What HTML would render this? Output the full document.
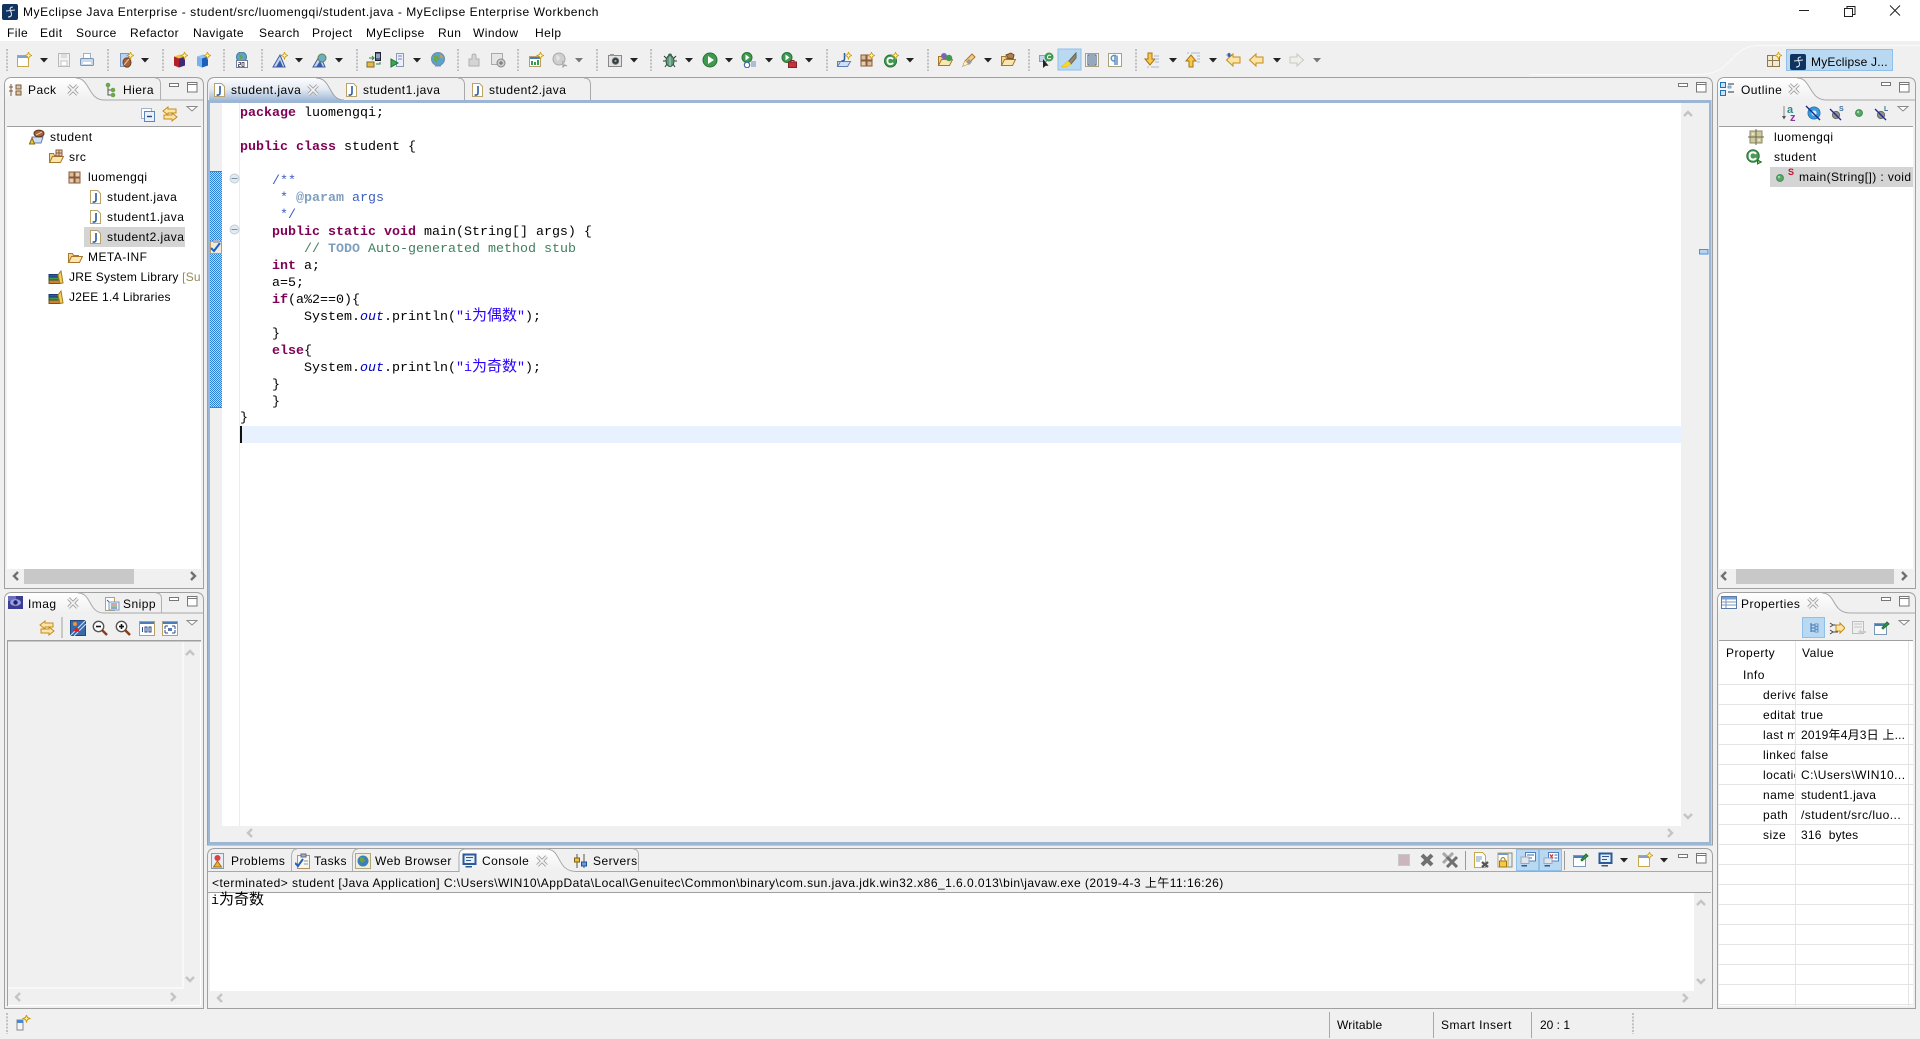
<!DOCTYPE html>
<html><head><meta charset="utf-8"><title>MyEclipse</title>
<style>
html,body{margin:0;padding:0;background:#f0f0f0}
#r{position:relative;width:1920px;height:1039px;overflow:hidden;font:12px/16px "Liberation Sans","WenQuanYi Zen Hei",sans-serif;color:#000;letter-spacing:.46px}
#r>span,.t{position:absolute;white-space:nowrap;height:16px;line-height:16px}
.i{position:absolute;width:16px;height:16px;overflow:visible}
.l{position:absolute;left:240px;height:17px;line-height:17px;white-space:pre;font:13.33px/17px "Liberation Mono",monospace;letter-spacing:0;color:#000}
.k{color:#7f0055;font-weight:bold}.g{color:#3f7f5f}.d{color:#3f5fbf}.m{color:#7f9fbf;font-weight:bold}.s{color:#2a00ff}.f{color:#0000c0;font-style:italic}
.z{font:15px/0 "WenQuanYi Zen Hei","Noto Sans CJK SC",sans-serif}
.clip{overflow:hidden}
</style></head><body><div id="r">
<svg width="1920" height="1039" style="position:absolute;left:0;top:0">
<defs>
<linearGradient id="gv" x1="0" y1="0" x2="0" y2="1"><stop offset="0" stop-color="#fff"/><stop offset="1" stop-color="#f0f0f0"/></linearGradient>
<linearGradient id="ge" x1="0" y1="0" x2="0" y2="1"><stop offset="0" stop-color="#fbfcfe"/><stop offset=".5" stop-color="#e4ebf3"/><stop offset="1" stop-color="#a3bcd9"/></linearGradient>
<pattern id="dt" width="2" height="2" patternUnits="userSpaceOnUse"><rect width="2" height="2" fill="#bcdaf8"/><rect width="1" height="1" fill="#2a7fd8"/><rect x="1" y="1" width="1" height="1" fill="#2a7fd8"/></pattern>
<path id="st" d="M12.5 0l1 2.5 2.5 1-2.5 1-1 2.5-1-2.5-2.5-1 2.5-1z" fill="#fff2a8" stroke="#c99a10" stroke-width=".8"/>
<symbol id="dd" viewBox="0 0 16 16"><path d="M4 6h8l-4 4.5z" fill="#222"/></symbol>
<symbol id="ddg" viewBox="0 0 16 16"><path d="M4 6h8l-4 4.5z" fill="#777"/></symbol>
<symbol id="cl" viewBox="0 0 16 16"><path d="M3.500 3.500l9 9M12.500 3.500l-9 9" stroke="#a0a0a0" stroke-width="3.4" fill="none"/><path d="M3.500 3.500l9 9M12.500 3.500l-9 9" stroke="#f4f4f4" stroke-width="1.6" fill="none"/></symbol>
<symbol id="mn" viewBox="0 0 16 16"><rect x="3.5" y="6.5" width="9" height="3" fill="#fff" stroke="#777"/></symbol>
<symbol id="mx" viewBox="0 0 16 16"><rect x="3.5" y="3.5" width="9.5" height="9.5" fill="#fff" stroke="#777"/><path d="M4 5.5h9" stroke="#777"/></symbol>
<symbol id="vm" viewBox="0 0 16 16"><path d="M3 5.5h10l-5 4.5z" fill="#fff" stroke="#8a8a8a"/></symbol>
<symbol id="jf" viewBox="0 0 16 16"><path d="M3.5 1.5h7l3 3v10h-10z" fill="#fff" stroke="#b9a36b"/><path d="M9 4v7q0 2.3-3.4 2" stroke="#2a5aa0" stroke-width="1.6" fill="none"/></symbol>
<symbol id="new" viewBox="0 0 16 16"><rect x="1.5" y="3.5" width="11" height="11" fill="#fff" stroke="#c5a84e"/><rect x="2" y="4" width="10" height="2" fill="#7ba3d4"/><use href="#st"/></symbol>
<symbol id="save" viewBox="0 0 16 16"><rect x="2.5" y="1.5" width="11" height="13" fill="#f2f2f2" stroke="#b8b8b8"/><rect x="5" y="2" width="6" height="4" fill="#ddd"/><rect x="5" y="9" width="6" height="5" fill="#fff" stroke="#c4c4c4"/></symbol>
<symbol id="print" viewBox="0 0 16 16"><rect x="4.5" y="1.5" width="7" height="5" fill="#fff" stroke="#9db0c8"/><rect x="1.5" y="6.5" width="13" height="7" rx="1" fill="#c9d8ea" stroke="#7c96b8"/><rect x="4" y="10" width="8" height="2" fill="#fff"/></symbol>
<symbol id="bean" viewBox="0 0 16 16"><path d="M2.5 1.5h8v13h-8z" fill="#bcd3ee" stroke="#7598c4"/><ellipse cx="9" cy="10.5" rx="4" ry="4.6" fill="#a5643c" stroke="#6e3d20"/><path d="M6 13l5-6" stroke="#e8c8a8"/><use href="#st"/></symbol>
<symbol id="box" viewBox="0 0 16 16"><path d="M2 4.5l6-2 5 2v9l-6 2-5-2z" fill="#e9c63a"/><path d="M2 4.5l5 2v9l-5-2z" fill="#b3202a"/><path d="M7 6.5l6-2v9l-6 2z" fill="#3f2a78"/><use href="#st"/></symbol>
<symbol id="cube" viewBox="0 0 16 16"><path d="M2 4.5l6-2 5 2v9l-6 2-5-2z" fill="#8fc4f2"/><path d="M2 4.5l5 2v9l-5-2z" fill="#79b2ea"/><path d="M7 6.5l6-2v9l-6 2z" fill="#1a5fc0"/><use href="#st"/></symbol>
<symbol id="g20" viewBox="0 0 16 16"><circle cx="7.5" cy="5" r="5" fill="#5aa7c7" stroke="#4a7a98"/><path d="M5 2l3 1 1 3-3 1z" fill="#6da34d"/><rect x="2.5" y="8.5" width="11" height="7" fill="#fff" stroke="#6d7ea5"/><path d="M4.5 10.5h2v2h-2v2h2M8 10.5h2v4h-2z" stroke="#334" fill="none" stroke-width=".8"/></symbol>
<symbol id="dep" viewBox="0 0 16 16"><path d="M1 15L8 3l5 12z" fill="#c5d6ef" stroke="#3a5ca8"/><path d="M4 15l4-7 3 7z" fill="#3a5ca8"/><use href="#st"/></symbol>
<symbol id="dep2" viewBox="0 0 16 16"><path d="M1 15L8 3l5 12z" fill="#c5d6ef" stroke="#3a5ca8"/><circle cx="10" cy="6" r="4" fill="#6bb0c0" stroke="#637f52"/><path d="M4 15l4-6 3 6z" fill="#3a5ca8"/></symbol>
<symbol id="db" viewBox="0 0 16 16"><rect x="9.5" y="0.5" width="5" height="8" fill="#4a6a8a" stroke="#223"/><path d="M10 3h4M10 5h4" stroke="#dde"/><path d="M1 10h7v5H1z" fill="#e8b84a" stroke="#7a6a2a"/><path d="M3 6h4M6 4l2 2-2 2M10 12h4v-2" stroke="#30803a" fill="none"/></symbol>
<symbol id="srv" viewBox="0 0 16 16"><rect x="6.5" y="1.5" width="7" height="13" fill="#eef" stroke="#8a9ab0"/><path d="M8 4h4M8 7h4" stroke="#6a8ab0"/><path d="M1 7l7 4-7 4z" fill="#3aa850" stroke="#1a7030"/></symbol>
<symbol id="globe" viewBox="0 0 16 16"><circle cx="8" cy="7" r="6.5" fill="#5aa2d6" stroke="#6a90a8"/><path d="M4 3l4 1 2 3-3 2-1 3-2-4z" fill="#6fa84a"/><path d="M10 2l3 3-1 2-2-2z" fill="#c9a04a"/><path d="M5 14h6" stroke="#88a"/></symbol>
<symbol id="gp" viewBox="0 0 16 16"><path d="M3 7h3V4q0-2 2-2t2 2v3h3v7H3z" fill="#d4d4d4" stroke="#b0b0b0"/></symbol>
<symbol id="gdoc" viewBox="0 0 16 16"><rect x="1.5" y="1.5" width="11" height="11" fill="#e6e6e6" stroke="#aaa"/><circle cx="11" cy="11" r="4" fill="#ccc" stroke="#888"/><path d="M9 11h4M11 9v4" stroke="#666"/></symbol>
<symbol id="cht" viewBox="0 0 16 16"><rect x="1.5" y="4.5" width="11" height="10" fill="#fff" stroke="#b8a068"/><rect x="2" y="5" width="10" height="2" fill="#4a7cb8"/><path d="M4 13V9M7 13v-3M10 13V8" stroke-width="2" stroke="#3a9a50"/><use href="#st"/></symbol>
<symbol id="ggl" viewBox="0 0 16 16"><circle cx="7" cy="7" r="6" fill="#cfcfcf" stroke="#aaa"/><path d="M4 3l3 1 1 3-3 2z" fill="#e4e4e4"/><path d="M11 9v6l2-2 2 1" stroke="#999" fill="#ddd"/></symbol>
<symbol id="cam" viewBox="0 0 16 16"><rect x="1.5" y="3.5" width="13" height="11" fill="#e2e2e2" stroke="#888"/><circle cx="8.5" cy="9" r="3.2" fill="#333" stroke="#666"/><circle cx="8.5" cy="9" r="1.2" fill="#7ab"/><rect x="3" y="2" width="4" height="2" fill="#999"/></symbol>
<symbol id="bug" viewBox="0 0 16 16"><path d="M2 4l3 3M14 4l-3 3M1 9h3M15 9h-3M3 15l2-3M13 15l-2-3" stroke="#333" fill="none"/><ellipse cx="8" cy="9" rx="4" ry="5.5" fill="#5f9a78" stroke="#2f5a44"/><circle cx="8" cy="3.5" r="2" fill="#3a6a5a"/><path d="M8 4v10" stroke="#b8d8c8"/></symbol>
<symbol id="run" viewBox="0 0 16 16"><circle cx="8" cy="8" r="7" fill="#3f9a50" stroke="#2a7038"/><path d="M6 4l6 4-6 4z" fill="#fff"/></symbol>
<symbol id="rh" viewBox="0 0 16 16"><circle cx="6" cy="5.5" r="5" fill="#3f9a50" stroke="#2a7038"/><path d="M4.5 2.5l4 3-4 3z" fill="#fff"/><circle cx="6" cy="13" r="2.7" fill="#fff" stroke="#2a5ca8"/><path d="M10 10h5M10 12h5M10 14h5" stroke="#6a8ab8"/></symbol>
<symbol id="rt" viewBox="0 0 16 16"><circle cx="6" cy="5.5" r="5" fill="#3f9a50" stroke="#2a7038"/><path d="M4.5 2.5l4 3-4 3z" fill="#fff"/><rect x="7.5" y="10" width="8" height="5.5" fill="#c8323a" stroke="#802028"/><path d="M10 10V8.5h3V10" stroke="#802028" fill="none"/></symbol>
<symbol id="jpr" viewBox="0 0 16 16"><path d="M1.5 9.5h4l2 5h-6z" fill="#d4e2f5" stroke="#5f7fb0"/><path d="M1.5 14.5l3-5h10l-3 5z" fill="#cfdff5" stroke="#5f7fb0"/><path d="M8.5 1v6q0 2-3 2" stroke="#2a5aa0" stroke-width="1.5" fill="none"/><use href="#st"/></symbol>
<symbol id="pk" viewBox="0 0 16 16"><rect x="2" y="3" width="5" height="5" fill="#d8bd9b" stroke="#8a5a3a"/><rect x="8" y="3" width="5" height="5" fill="#e6d0b4" stroke="#8a5a3a"/><rect x="2" y="9" width="5" height="5" fill="#e6d0b4" stroke="#8a5a3a"/><rect x="8" y="9" width="5" height="5" fill="#d8bd9b" stroke="#8a5a3a"/></symbol>
<symbol id="pks" viewBox="0 0 16 16"><use href="#pk"/><use href="#st"/></symbol>
<symbol id="cs" viewBox="0 0 16 16"><circle cx="7.5" cy="9" r="6" fill="#3f9a50" stroke="#2a7038"/><path d="M10 7.2q-1-1.4-2.6-1.4-3 0-3 3.2t3 3.2q1.6 0 2.6-1.4" stroke="#fff" stroke-width="1.8" fill="none"/><use href="#st"/></symbol>
<symbol id="fo" viewBox="0 0 16 16"><path d="M1.5 13.5v-9h4l1 2h5v2" fill="#f2d58e" stroke="#a9772a"/><path d="M1.5 13.5l3-6h11l-3 6z" fill="#fbe6b0" stroke="#a9772a"/></symbol>
<symbol id="fog" viewBox="0 0 16 16"><use href="#fo"/><circle cx="7" cy="4" r="3" fill="#7a66b8"/><circle cx="12" cy="6" r="3.2" fill="#3f9a50"/></symbol>
<symbol id="pen" viewBox="0 0 16 16"><path d="M2 14l2-5 7-7 3 3-7 7z" fill="#f4c98a" stroke="#a87a2a"/><path d="M5 10l3 3 3-3-3-3z" fill="#999"/><path d="M2 14l2-5 3 3z" fill="#fff4c8"/></symbol>
<symbol id="fob" viewBox="0 0 16 16"><use href="#fo"/><path d="M6 3l5-2 3 2-1 4-5-1z" fill="#b08050" stroke="#704a20"/></symbol>
<symbol id="ot" viewBox="0 0 16 16"><rect x="1.5" y="3.5" width="7" height="6" fill="#c4d6ec" stroke="#8a9fbc"/><circle cx="11" cy="5" r="4.5" fill="#3f9a50"/><path d="M13 3.5q-3-1.2-3.5 1.4t3.5 1.6" stroke="#fff" fill="none"/><path d="M5 7v9l2.6-2.2 3 0z" fill="#222"/></symbol>
<symbol id="br" viewBox="0 0 16 16"><path d="M15 1L7 10l3 2 5-6z" fill="#908870" stroke="#6a6650"/><path d="M7 9l3 3-4 3H0z" fill="#f8d828" stroke="#d8b010" stroke-width=".5"/></symbol>
<symbol id="blk" viewBox="0 0 16 16"><rect x="1.5" y="1.5" width="13" height="13" fill="#f2f4f8" stroke="#a8a080"/><rect x="4" y="3" width="8" height="10" fill="#fff" stroke="#30507a"/><path d="M5 5h6M5 7h6M5 9h6M5 11h6" stroke="#30507a"/></symbol>
<symbol id="pil" viewBox="0 0 16 16"><rect x="1.5" y="1.5" width="13" height="13" fill="#fff" stroke="#a8a080"/><path d="M9 3.5H7a2.7 2.7 0 0 0 0 5.5h1M8 3.5V13M10 3.5V13" stroke="#5a90c8" stroke-width="1.5" fill="none"/></symbol>
<symbol id="dn" viewBox="0 0 16 16"><path d="M4 1h4v6h3l-5 6-5-6h3z" fill="#f8c850" stroke="#a87510"/><path d="M10 4h5M11 7h4M11 10h4M3 15h2M7 15h8" stroke="#a8b8d8"/></symbol>
<symbol id="up" viewBox="0 0 16 16"><path d="M4 15h4V9h3L6 3 1 9h3z" fill="#f8c850" stroke="#a87510"/><path d="M2 1h2M6 1h9M12 4h3M12 7h3M12 10h3" stroke="#a8b8d8"/></symbol>
<symbol id="bk" viewBox="0 0 16 16"><path d="M15 5v6H8v3L1.5 8 8 2v3z" fill="#fbe6a8" stroke="#c68a1a"/></symbol>
<symbol id="bks" viewBox="0 0 16 16"><use href="#bk" /><path d="M3 1l2 4M5 1L3 5M1.5 3h5" stroke="#2a5ca8"/></symbol>
<symbol id="fw" viewBox="0 0 16 16"><path d="M1 5v6h7v3l6.5-6L8 2v3z" fill="#efefe8" stroke="#c8c8c0"/></symbol>
<symbol id="lnk" viewBox="0 0 16 16"><path d="M6 1L1 5l5 4V7h8V3H6z" fill="#fbe6a8" stroke="#c68a1a"/><path d="M10 7l5 4-5 4v-2H2V9h8z" fill="#fbe6a8" stroke="#c68a1a"/></symbol>
<symbol id="col" viewBox="0 0 16 16"><rect x="1.5" y="1.5" width="10" height="10" fill="#fff" stroke="#9ab4d4"/><rect x="4.5" y="4.5" width="10" height="10" fill="#eaf1f9" stroke="#5e86b8"/><path d="M7 9.5h5" stroke="#1a4a8a" stroke-width="1.4"/></symbol>
<symbol id="hi" viewBox="0 0 16 16"><path d="M5 3v10h5M5 8h5" stroke="#555" fill="none"/><circle cx="5" cy="3" r="2.3" fill="#6aa84a"/><circle cx="10" cy="8" r="2.3" fill="#6aa84a"/><circle cx="10" cy="13" r="2.3" fill="#6aa84a"/></symbol>
<symbol id="pkx" viewBox="0 0 16 16"><path d="M3 2v12M8 3h5v4H8zM8 9h5v4H8z" stroke="#7a5a3a" fill="#dcc8a8"/><path d="M1 5h4M1 9h4" stroke="#7a5a3a"/></symbol>
<symbol id="prj" viewBox="0 0 16 16"><path d="M3 8h11l-2 6H4z" fill="#cfe0f5" stroke="#5f7fb0"/><ellipse cx="10" cy="4.5" rx="5" ry="3.4" fill="#a5643c" stroke="#5e3415"/><path d="M7 6l6-3" stroke="#e8c8a8"/><path d="M3 9l2.6 6H.4z" fill="#f4c040" stroke="#8a6a10"/></symbol>
<symbol id="src" viewBox="0 0 16 16"><use href="#fo"/><path d="M8 1h6v6H8z" fill="#e6d0b4" stroke="#8a5a3a"/><path d="M11 1v6M8 4h6" stroke="#8a5a3a"/></symbol>
<symbol id="lib" viewBox="0 0 16 16"><rect x="1" y="11" width="11" height="3.5" fill="#d08030" stroke="#805020"/><rect x="1" y="8" width="11" height="3" fill="#3f9a50" stroke="#205a30"/><rect x="1" y="5.5" width="11" height="2.5" fill="#2a5ca8" stroke="#1a3a70"/><path d="M12 14.5L10 6l3-4 2 12z" fill="#f4d060" stroke="#a08020"/></symbol>
<symbol id="img" viewBox="0 0 16 16"><rect x="0" y="1" width="15" height="13" fill="#3a3e92"/><rect x="0" y="1" width="8" height="5" fill="#6a6ec0"/><ellipse cx="7.5" cy="7.5" rx="5.5" ry="3.4" fill="#9ca0e0"/><circle cx="7.5" cy="7.5" r="2.2" fill="#22245a"/></symbol>
<symbol id="snp" viewBox="0 0 16 16"><path d="M1.5 1.5h9v13h-9z" fill="#fff" stroke="#b8a068"/><path d="M3 4l3 3" stroke="#2a5ca8"/><rect x="5" y="6" width="10" height="8" fill="#eaf2fb" stroke="#7a9ac4"/><path d="M7 8h6" stroke="#d05050"/><path d="M7 10h6" stroke="#3f9a50"/><path d="M7 12h6" stroke="#2a5ca8"/></symbol>
<symbol id="im1" viewBox="0 0 16 16"><rect x="0.5" y="0.5" width="15" height="15" fill="#3a68a8" stroke="#23487a"/><path d="M0 16L16 0M4 16L16 4" stroke="#cfe0f5"/><circle cx="5" cy="4" r="2" fill="#f09040"/><path d="M3 11l4-4 3 5z" fill="#d02020"/></symbol>
<symbol id="zm" viewBox="0 0 16 16"><circle cx="6.5" cy="6.5" r="5.2" fill="#fff" stroke="#555" stroke-width="1.4"/><path d="M4 6.5h5" stroke="#111" stroke-width="1.6"/><path d="M10 10l5 5" stroke="#8a3a20" stroke-width="2.4"/></symbol>
<symbol id="zp" viewBox="0 0 16 16"><use href="#zm"/><path d="M6.5 4v5" stroke="#111" stroke-width="1.6"/></symbol>
<symbol id="z100" viewBox="0 0 16 16"><rect x="0.5" y="1.5" width="15" height="14" fill="#fff" stroke="#b8a068"/><rect x="1" y="2" width="14" height="2" fill="#4a7cb8"/><path d="M3.5 7v5M6 7h2v5H6zM10 7h2v5h-2z" stroke="#2a4a8a" fill="none"/></symbol>
<symbol id="zf" viewBox="0 0 16 16"><rect x="0.5" y="1.5" width="15" height="14" fill="#fff" stroke="#b8a068"/><rect x="1" y="2" width="14" height="2" fill="#4a7cb8"/><path d="M3 6h3M3 6v3M13 6h-3M13 6v3M3 13h3M3 13v-3M13 13h-3M13 13v-3" stroke="#2a4a8a"/><rect x="6" y="8" width="4" height="3" fill="#5a7ab0"/></symbol>
<symbol id="ol" viewBox="0 0 16 16"><rect x="1.5" y="1.5" width="5" height="5" fill="#c9e0f5" stroke="#1e72b8"/><rect x="1.5" y="9.5" width="5" height="5" fill="#c9e0f5" stroke="#1e72b8"/><path d="M9 3h6M9 11h6" stroke="#333"/><rect x="9" y="5" width="3" height="2" fill="#c9e0f5" stroke="#1e72b8" stroke-width=".6"/></symbol>
<symbol id="az" viewBox="0 0 16 16"><path d="M2 1v12" stroke="#888"/><path d="M0 11l2 3.500 2-3.500z" fill="#555"/><text x="5" y="8" font-family="Liberation Sans,sans-serif" font-weight="bold" font-size="11" fill="#2a8a8a" letter-spacing="0">a</text><text x="8" y="16" font-family="Liberation Sans,sans-serif" font-weight="bold" font-size="11" fill="#8a3a98" letter-spacing="0">z</text></symbol>
<symbol id="hf" viewBox="0 0 16 16"><circle cx="9" cy="8" r="6" fill="#3a9ae0" stroke="#2a78b8"/><circle cx="9" cy="8" r="2.6" fill="#d8ecfa"/><path d="M1 1l14 14" stroke="#1a2a8a" stroke-width="1.4"/></symbol>
<symbol id="hs" viewBox="0 0 16 16"><circle cx="7" cy="10" r="3.6" fill="#909090" stroke="#6a6a6a"/><path d="M1 4l11 11" stroke="#1a2a8a" stroke-width="1.3"/><text x="10" y="6" font-family="Liberation Sans,sans-serif" font-weight="bold" font-size="7" fill="#3a6a9a" letter-spacing="0">S</text></symbol>
<symbol id="hl" viewBox="0 0 16 16"><circle cx="7" cy="10" r="3.6" fill="#909090" stroke="#6a6a6a"/><path d="M1 4l11 11" stroke="#1a2a8a" stroke-width="1.3"/><text x="10" y="6" font-family="Liberation Sans,sans-serif" font-weight="bold" font-size="7" fill="#3a6a9a" letter-spacing="0">L</text></symbol>
<symbol id="dot" viewBox="0 0 16 16"><circle cx="8" cy="8" r="3.4" fill="#5ba868" stroke="#3a8a50"/><circle cx="7" cy="7" r="1.2" fill="#a8d8b0"/></symbol>
<symbol id="pko" viewBox="0 0 16 16"><rect x="2" y="2" width="12" height="12" fill="#cfc9a0" stroke="#8a8660"/><path d="M8 0v16M0 8h16" stroke="#6a6a4a"/><circle cx="5" cy="5" r="1" fill="#f0f0d8"/><circle cx="11" cy="11" r="1" fill="#f0f0d8"/></symbol>
<symbol id="cls" viewBox="0 0 16 16"><circle cx="7" cy="7" r="6.2" fill="#4a9a58" stroke="#2a7038"/><path d="M10 5q-1-1.6-3-1.6-3.4 0-3.4 3.6t3.4 3.6q2 0 3-1.6" stroke="#fff" stroke-width="2" fill="none"/><path d="M11.5 11l4 2-4 2z" fill="#7ac848" stroke="#207030"/></symbol>
<symbol id="prob" viewBox="0 0 16 16"><rect x="1.5" y="0.5" width="12" height="15" fill="#e8eef6" stroke="#8a9ab0"/><circle cx="7.5" cy="5" r="3" fill="#e04040"/><path d="M7.5 8l4 6h-8z" fill="#f0b030" stroke="#a07010"/></symbol>
<symbol id="task" viewBox="0 0 16 16"><rect x="2.5" y="2.5" width="12" height="13" fill="#fbf6e8" stroke="#b89060"/><rect x="6" y="1" width="5" height="3" fill="#a8b0c0" stroke="#606880"/><path d="M0 10l3 3 5-7" stroke="#2060c8" stroke-width="2" fill="none"/><path d="M9 8h4M9 11h4" stroke="#7a9ac8"/></symbol>
<symbol id="wb" viewBox="0 0 16 16"><rect x="0.5" y="0.5" width="15" height="15" fill="#f2efd8" stroke="#b0a878"/><circle cx="8" cy="8" r="5.5" fill="#3a80c0"/><path d="M5 4l4 1 1 3-3 2-2-2z" fill="#6aa04a"/></symbol>
<symbol id="mon" viewBox="0 0 16 16"><rect x="1.5" y="1.5" width="12" height="9.5" fill="#e6eef8" stroke="#2a5a98" stroke-width="2"/><path d="M4 4.5h7M4 7.5h5" stroke="#2a5a98"/><path d="M5 13h5v1.5H3.5V13z" fill="#2a5a98"/></symbol>
<symbol id="srvs" viewBox="0 0 16 16"><path d="M4 1v14M11 1v14" stroke="#555"/><rect x="1.5" y="5" width="5" height="4" fill="#f0c040" stroke="#806010"/><rect x="8.5" y="9" width="5" height="4" fill="#60a0e0" stroke="#205090"/></symbol>
<symbol id="stp" viewBox="0 0 16 16"><rect x="2.5" y="2.5" width="11" height="11" fill="#ccb5bb" stroke="#c8c8c8"/></symbol>
<symbol id="rm" viewBox="0 0 16 16"><path d="M3 3l10 10M13 3L3 13" stroke="#707070" stroke-width="4"/></symbol>
<symbol id="rma" viewBox="0 0 16 16"><path d="M1 1l10 10M11 1L1 11" stroke="#a8a8a8" stroke-width="3"/><path d="M5 5l10 10M15 5L5 15" stroke="#707070" stroke-width="3"/></symbol>
<symbol id="cdoc" viewBox="0 0 16 16"><path d="M1.5 0.5h8l3 3v12h-11z" fill="#fff" stroke="#c5a84e"/><path d="M3 5h6M3 7h6M3 9h4" stroke="#7a9ac8"/><path d="M9 10l6 5M15 10l-6 5" stroke="#555" stroke-width="2.4"/></symbol>
<symbol id="lock" viewBox="0 0 16 16"><rect x="11" y="1" width="4" height="14" fill="#e4ecf6" stroke="#8a8a6a"/><rect x="1" y="1" width="10" height="14" fill="#fff" stroke="#b8a068"/><rect x="1" y="1" width="10" height="2" fill="#6a9ad0"/><rect x="2.5" y="9" width="7" height="6" fill="#f4c848" stroke="#a07a10"/><path d="M4 9V7q2-3 4 0v2" stroke="#a07a10" fill="none"/></symbol>
<symbol id="cm" viewBox="0 0 16 16"><rect x="5.5" y="0.5" width="10" height="8.5" fill="#fff" stroke="#4a80c0"/><path d="M7 3h7M7 6h5" stroke="#3a6aa8"/><rect x="1" y="5" width="8" height="6.5" fill="#dfe6ee" stroke="#9aa8b8"/><path d="M3 13h4v1.5H1.5V13z" fill="#2a5a98"/></symbol>
<symbol id="cmx" viewBox="0 0 16 16"><rect x="5.5" y="0.5" width="10" height="8.5" fill="#fff" stroke="#4a80c0"/><path d="M7 2.5l3 4M10 2.5l-3 4" stroke="#d83030" stroke-width="1.3"/><path d="M11.5 3h3M11.5 6h3" stroke="#3a6aa8"/><rect x="1" y="6" width="8" height="5.5" fill="#dfe6ee" stroke="#9aa8b8"/><path d="M3 13h4v1.5H1.5V13z" fill="#2a5a98"/></symbol>
<symbol id="pin" viewBox="0 0 16 16"><rect x="0.5" y="3.5" width="12" height="11" fill="#fff" stroke="#7a98b8"/><rect x="1" y="4" width="11" height="2" fill="#4a7cb8"/><path d="M8 8l5-6 2 2-6 5z" fill="#30a040" stroke="#207030"/></symbol>
<symbol id="tr" viewBox="0 0 16 16"><path d="M5 3v9M5 5h4M5 8h4M5 11h4" stroke="#3a70b0" fill="none"/><rect x="9" y="4" width="3" height="2" fill="#eef4fa" stroke="#3a70b0" stroke-width=".7"/><rect x="9" y="7" width="3" height="2" fill="#eef4fa" stroke="#3a70b0" stroke-width=".7"/><rect x="9" y="10" width="3" height="2" fill="#eef4fa" stroke="#3a70b0" stroke-width=".7"/></symbol>
<symbol id="tn" viewBox="0 0 16 16"><path d="M1 3l3 2-3 2M1 10l3 2-3 2M4 5h5M4 12h5" stroke="#444" fill="none"/><path d="M7 5h4V3l5 5-5 5v-2H7z" fill="#fbe6a8" stroke="#c68a1a"/></symbol>
<symbol id="tg" viewBox="0 0 16 16"><rect x="1.5" y="1.5" width="11" height="12" fill="#efefef" stroke="#bdbdbd"/><path d="M3 4h8M3 7h8" stroke="#c4c4c4"/><path d="M7 12l3-3v2h5v2h-5v2z" fill="#ccc"/></symbol>
<symbol id="sts" viewBox="0 0 16 16"><rect x="2" y="5" width="6" height="10" fill="#f4f4fa" stroke="#8a8a8a"/><rect x="2" y="5" width="6" height="3" fill="#4a86d0"/><path d="M11.5 0l1 2.5 2.5 1-2.5 1-1 2.5-1-2.5-2.5-1 2.5-1z" fill="#fff2a8" stroke="#c99a10"/></symbol>
<symbol id="me" viewBox="0 0 16 16"><rect width="16" height="16" rx="2" fill="#10345f"/><path d="M11 3C7 3 8 6 9 8s1 5-3 5M4 7l9-1" stroke="#d8e4f0" stroke-width="1.1" fill="none"/></symbol>
<symbol id="oper" viewBox="0 0 16 16"><rect x="1.5" y="3.5" width="12" height="11" fill="#f4e8d0" stroke="#8a7a50"/><path d="M6.5 4v10M2 8.5h11" stroke="#8a7a50"/><use href="#st"/></symbol>
</defs>
<!-- base -->
<rect width="1920" height="1039" fill="#f0f0f0"/>
<rect width="1920" height="41" fill="#fff"/>
<path d="M1530 74.5H1700C1736 73 1728 46 1760 45.5H1920" stroke="#fafafa" fill="none"/>
<rect x="1058" y="49" width="23" height="21" fill="#b9d8f2" stroke="#8fc0ea"/>
<rect x="1786.5" y="49.5" width="106" height="21" fill="#b9d8f2" stroke="#8fc0ea"/>
<!-- grips -->
<g stroke="#c0c0c0" stroke-width="2" stroke-dasharray="2 1.4"><path d="M7 49v22M108 49v22M163 49v22M224 49v22M262 49v22M357 49v22M458 49v22M518 49v22M597 49v22M651 49v22M827 49v22M928 49v22M1029 49v22M1136 49v22M7 1013v21M1633 1013v21"/></g>

<!-- PACK panel -->
<path d="M4.5 588.5V85Q4.5 77.5 12 77.5H196Q203.5 77.5 203.5 85V588.5Z" fill="#f0f0f0" stroke="#a0a0a0"/>
<path d="M5 100V85Q5 78 12 78H76C90 78 88 100 104 100Z" fill="url(#gv)"/>
<path d="M76 78C90 78 88 100 104 100H203" stroke="#a8a8a8" fill="none"/>
<path d="M160.500 100V83Q160 78 155 78" stroke="#b0b0b0" fill="none"/>
<rect x="7" y="127" width="194" height="442" fill="#fff"/>
<rect x="7" y="126" width="194" height="1" fill="#a0a0a0"/>
<rect x="84" y="227" width="101" height="20" fill="#d4d4d4"/>
<rect x="24" y="569" width="110" height="15" fill="#c8c8c8"/>
<!-- IMAGE panel -->
<path d="M4.5 1008.500V600Q4.5 592.5 12 592.500H196Q203.5 592.5 203.5 600V1008.500Z" fill="#f0f0f0" stroke="#a0a0a0"/>
<path d="M5 613V600Q5 593 12 593H78C92 593 88 613 104 613Z" fill="url(#gv)"/>
<path d="M78 593C92 593 88 613 104 613H203" stroke="#a8a8a8" fill="none"/>
<path d="M161.500 613V598Q161 593 156 593" stroke="#b0b0b0" fill="none"/>
<path d="M7.500 1006V641H201" stroke="#a0a0a0" fill="none"/><rect x="7" y="640" width="194" height="1" fill="#a0a0a0"/>
<path d="M8 1005.500H200.500V642M183 642V988H8" stroke="#fff" fill="none"/>
<path d="M62 617v21" stroke="#a0a0a0"/>

<!-- EDITOR -->
<path d="M207.500 845V85Q207.5 77.5 215 77.500H1705Q1712.5 77.500 1712.500 85V845Z" fill="#f0f0f0" stroke="#a0a0a0"/>
<path d="M209 100V85Q209 78 216 78H316C332 78 328 100 344 100Z" fill="url(#ge)"/>
<path d="M316 78C332 78 328 100 344 100" stroke="#a0a0a0" fill="none"/>
<path d="M464.500 100V84Q464 78 458 78M590.500 100V84Q590 78 584 78" stroke="#a8a8a8" fill="none"/>
<rect x="208" y="100" width="1503" height="3" fill="#9cb6d4"/>
<rect x="208" y="100" width="2" height="745" fill="#9cb6d4"/>
<rect x="1709" y="100" width="2.500" height="745" fill="#9cb6d4"/>
<rect x="208" y="842" width="1503" height="3" fill="#9cb6d4"/>
<rect x="222" y="103" width="1459" height="723" fill="#fff"/>
<rect x="239" y="103" width="1" height="723" fill="#ececec"/>
<rect x="240" y="426" width="1441" height="17" fill="#e8f2fe"/>
<rect x="240" y="426" width="2" height="17" fill="#111"/>
<rect x="210" y="171" width="12" height="237" fill="url(#dt)"/>
<rect x="210" y="171" width="12" height="1" fill="#2f87dc"/><rect x="210" y="407" width="12" height="1" fill="#2f87dc"/>
<rect x="210.500" y="241.500" width="11" height="12" fill="#f0ead8" stroke="#c09a60"/><rect x="213" y="240" width="6" height="3" fill="#a8b0c0"/><path d="M211 248l3 3 6-8" stroke="#1a60d0" stroke-width="2" fill="none"/>
<rect x="1699.500" y="249.500" width="8.500" height="4.500" fill="#b7d4f3" stroke="#4a90dc"/>
<g stroke="#c4ced8" fill="#e2e9f1"><circle cx="234.500" cy="178.500" r="4.500"/><circle cx="234.500" cy="229.500" r="4.500"/></g>
<path d="M231.500 178.500h6M231.500 229.500h6" stroke="#7a90a8"/>

<!-- OUTLINE -->
<path d="M1717.500 588.500V85Q1717.500 77.500 1725 77.500H1908Q1915.500 77.500 1915.500 85V588.500Z" fill="#f0f0f0" stroke="#a0a0a0"/>
<path d="M1718 100V85Q1718 78 1725 78H1797C1812 78 1808 100 1827 100Z" fill="url(#gv)"/>
<path d="M1797 78C1812 78 1808 100 1827 100H1915" stroke="#a8a8a8" fill="none"/>
<rect x="1719" y="127" width="194" height="442" fill="#fff"/>
<rect x="1719" y="126" width="194" height="1" fill="#a0a0a0"/>
<rect x="1770" y="167" width="143" height="20" fill="#d4d4d4"/>
<rect x="1736" y="569" width="158" height="15" fill="#c8c8c8"/>

<!-- PROPERTIES -->
<path d="M1717.500 1008.500V600Q1717.500 592.500 1725 592.500H1908Q1915.500 592.500 1915.500 600V1008.500Z" fill="#f0f0f0" stroke="#a0a0a0"/>
<path d="M1718 613V600Q1718 593 1725 593H1822C1836 593 1832 613 1850 613Z" fill="url(#gv)"/>
<path d="M1822 593C1836 593 1832 613 1850 613H1915" stroke="#a8a8a8" fill="none"/>
<rect x="1719" y="641" width="194" height="365" fill="#fff"/>
<rect x="1719" y="640" width="194" height="1" fill="#a0a0a0"/>
<rect x="1802.500" y="617.500" width="22" height="20" fill="#b9d8f2" stroke="#8fc0ea"/>
<g stroke="#e4e4e4"><path d="M1795.500 641V1006M1908.500 641V1006"/><path d="M1719 684.500H1913M1719 704.500H1913M1719 724.500H1913M1719 744.500H1913M1719 764.500H1913M1719 784.500H1913M1719 804.500H1913M1719 824.500H1913M1719 844.500H1913M1719 864.500H1913M1719 884.500H1913M1719 904.500H1913M1719 924.500H1913M1719 944.500H1913M1719 964.500H1913M1719 984.500H1913M1719 1004.500H1913"/></g>

<!-- CONSOLE -->
<path d="M207.500 1008.500V856Q207.500 848.500 215 848.500H1705Q1712.500 848.500 1712.500 856V1008.500Z" fill="#f0f0f0" stroke="#a0a0a0"/>
<path d="M459 871V856Q459 849 466 849H546C562 849 556 871 576 871Z" fill="url(#gv)"/>
<path d="M207.500 871.500H459V856Q459 849 466 849H546C562 849 556 871 576 871.500H1712" stroke="#a8a8a8" fill="none"/>
<path d="M291.500 871V856Q292 849 297 849M352.500 871V856Q353 849 358 849M638.500 871V854Q638 849 633 849" stroke="#b0b0b0" fill="none"/>
<rect x="208" y="892" width="1503" height="1" fill="#a0a0a0"/>
<rect x="210" y="893" width="1484" height="98" fill="#fff"/>
<rect x="1516.500" y="849.500" width="22" height="21" fill="#b9d8f2" stroke="#8fc0ea"/>
<rect x="1539.500" y="849.500" width="22" height="21" fill="#b9d8f2" stroke="#8fc0ea"/>
<path d="M1465.500 851v19M1564.500 851v19" stroke="#9a9a9a"/>
<!-- status -->
<path d="M1329.500 1012v26M1433.500 1012v26M1531.500 1012v26" stroke="#a8a8a8"/>
<!-- scroll chevrons -->
<g fill="none" stroke="#c4c4c4" stroke-width="2.400">
<path d="M1684 116l4-4 4 4M1684 814l4 4 4-4"/><path d="M252 829l-4 4 4 4M1668 829l4 4-4 4"/>
<path d="M222 994l-4 4 4 4M1683 994l4 4-4 4"/><path d="M1697 905l4-4 4 4M1697 979l4 4 4-4"/>
<path d="M186 655l4-4 4 4M186 977l4 4 4-4"/><path d="M20 993l-4 4 4 4M171 993l4 4-4 4"/>
</g>
<g fill="none" stroke="#707070" stroke-width="2.400"><path d="M18 572l-4 4 4 4M191 572l4 4-4 4M1726 572l-4 4 4 4M1902 572l4 4-4 4"/></g>
<!-- window controls -->
<g fill="none" stroke="#222"><path d="M1799 10.500h10"/><rect x="1844.500" y="8.500" width="8" height="8"/><path d="M1847 8V6.500h8v8h-2"/><path d="M1890 5.500l10 10M1900 5.500l-10 10" /></g>
</svg>

<!-- title bar -->
<svg class="i" style="left:2px;top:4px"><use href="#me"/></svg>
<span style="left:23px;top:4px;letter-spacing:.54px">MyEclipse Java Enterprise - student/src/luomengqi/student.java - MyEclipse Enterprise Workbench</span>
<span style="left:7px;top:25px">File</span><span style="left:40px;top:25px">Edit</span><span style="left:76px;top:25px">Source</span><span style="left:130px;top:25px">Refactor</span><span style="left:193px;top:25px">Navigate</span><span style="left:259px;top:25px">Search</span><span style="left:312px;top:25px">Project</span><span style="left:366px;top:25px">MyEclipse</span><span style="left:438px;top:25px">Run</span><span style="left:473px;top:25px">Window</span><span style="left:535px;top:25px">Help</span>

<!-- toolbar icons -->
<svg class="i" style="left:16px;top:52px"><use href="#new"/></svg><svg class="i" style="left:36px;top:52px"><use href="#dd"/></svg>
<svg class="i" style="left:56px;top:52px"><use href="#save"/></svg><svg class="i" style="left:79px;top:52px"><use href="#print"/></svg>
<svg class="i" style="left:118px;top:52px"><use href="#bean"/></svg><svg class="i" style="left:137px;top:52px"><use href="#dd"/></svg>
<svg class="i" style="left:172px;top:52px"><use href="#box"/></svg><svg class="i" style="left:195px;top:52px"><use href="#cube"/></svg>
<svg class="i" style="left:234px;top:52px"><use href="#g20"/></svg>
<svg class="i" style="left:272px;top:52px"><use href="#dep"/></svg><svg class="i" style="left:291px;top:52px"><use href="#dd"/></svg>
<svg class="i" style="left:312px;top:52px"><use href="#dep2"/></svg><svg class="i" style="left:331px;top:52px"><use href="#dd"/></svg>
<svg class="i" style="left:366px;top:52px"><use href="#db"/></svg>
<svg class="i" style="left:390px;top:52px"><use href="#srv"/></svg><svg class="i" style="left:409px;top:52px"><use href="#dd"/></svg>
<svg class="i" style="left:430px;top:52px"><use href="#globe"/></svg>
<svg class="i" style="left:466px;top:52px"><use href="#gp"/></svg><svg class="i" style="left:490px;top:52px"><use href="#gdoc"/></svg>
<svg class="i" style="left:528px;top:52px"><use href="#cht"/></svg>
<svg class="i" style="left:552px;top:52px"><use href="#ggl"/></svg><svg class="i" style="left:571px;top:52px"><use href="#ddg"/></svg>
<svg class="i" style="left:607px;top:52px"><use href="#cam"/></svg><svg class="i" style="left:626px;top:52px"><use href="#dd"/></svg>
<svg class="i" style="left:662px;top:52px"><use href="#bug"/></svg><svg class="i" style="left:681px;top:52px"><use href="#dd"/></svg>
<svg class="i" style="left:702px;top:52px"><use href="#run"/></svg><svg class="i" style="left:721px;top:52px"><use href="#dd"/></svg>
<svg class="i" style="left:741px;top:52px"><use href="#rh"/></svg><svg class="i" style="left:761px;top:52px"><use href="#dd"/></svg>
<svg class="i" style="left:781px;top:52px"><use href="#rt"/></svg><svg class="i" style="left:801px;top:52px"><use href="#dd"/></svg>
<svg class="i" style="left:836px;top:52px"><use href="#jpr"/></svg><svg class="i" style="left:859px;top:52px"><use href="#pks"/></svg>
<svg class="i" style="left:883px;top:52px"><use href="#cs"/></svg><svg class="i" style="left:902px;top:52px"><use href="#dd"/></svg>
<svg class="i" style="left:937px;top:52px"><use href="#fog"/></svg><svg class="i" style="left:961px;top:52px"><use href="#pen"/></svg><svg class="i" style="left:980px;top:52px"><use href="#dd"/></svg>
<svg class="i" style="left:1000px;top:52px"><use href="#fob"/></svg>
<svg class="i" style="left:1038px;top:52px"><use href="#ot"/></svg><svg class="i" style="left:1061px;top:52px"><use href="#br"/></svg>
<svg class="i" style="left:1084px;top:52px"><use href="#blk"/></svg><svg class="i" style="left:1107px;top:52px"><use href="#pil"/></svg>
<svg class="i" style="left:1144px;top:52px"><use href="#dn"/></svg><svg class="i" style="left:1165px;top:52px"><use href="#dd"/></svg>
<svg class="i" style="left:1185px;top:52px"><use href="#up"/></svg><svg class="i" style="left:1205px;top:52px"><use href="#dd"/></svg>
<svg class="i" style="left:1225px;top:52px"><use href="#bks"/></svg><svg class="i" style="left:1248px;top:52px"><use href="#bk"/></svg><svg class="i" style="left:1269px;top:52px"><use href="#dd"/></svg>
<svg class="i" style="left:1289px;top:52px"><use href="#fw"/></svg><svg class="i" style="left:1309px;top:52px"><use href="#ddg"/></svg>
<svg class="i" style="left:1766px;top:52px"><use href="#oper"/></svg>
<svg class="i" style="left:1790px;top:54px"><use href="#me"/></svg>
<span style="left:1811px;top:54px;letter-spacing:.2px">MyEclipse J...</span>

<!-- Pack tab -->
<svg class="i" style="left:8px;top:82px"><use href="#pkx"/></svg><span style="left:28px;top:82px">Pack</span><svg class="i" style="left:65px;top:82px"><use href="#cl"/></svg>
<svg class="i" style="left:103px;top:82px"><use href="#hi"/></svg><span style="left:123px;top:82px">Hiera</span>
<svg class="i" style="left:166px;top:77px"><use href="#mn"/></svg><svg class="i" style="left:184px;top:79px"><use href="#mx"/></svg>
<svg class="i" style="left:140px;top:107px"><use href="#col"/></svg><svg class="i" style="left:162px;top:106px"><use href="#lnk"/></svg><svg class="i" style="left:184px;top:101px"><use href="#vm"/></svg>
<svg class="i" style="left:29px;top:129px"><use href="#prj"/></svg><span style="left:50px;top:129px">student</span>
<svg class="i" style="left:48px;top:149px"><use href="#src"/></svg><span style="left:69px;top:149px">src</span>
<svg class="i" style="left:67px;top:169px"><use href="#pk"/></svg><span style="left:88px;top:169px">luomengqi</span>
<svg class="i" style="left:87px;top:189px"><use href="#jf"/></svg><span style="left:107px;top:189px">student.java</span>
<svg class="i" style="left:87px;top:209px"><use href="#jf"/></svg><span style="left:107px;top:209px">student1.java</span>
<svg class="i" style="left:87px;top:229px"><use href="#jf"/></svg><span style="left:107px;top:229px">student2.java</span>
<svg class="i" style="left:67px;top:249px"><use href="#fo"/></svg><span style="left:88px;top:249px">META-INF</span>
<svg class="i" style="left:48px;top:269px"><use href="#lib"/></svg><span class="clip" style="left:69px;top:269px;width:131px;letter-spacing:.2px">JRE System Library <span style="color:#958a5a">[Sun JDK]</span></span>
<svg class="i" style="left:48px;top:289px"><use href="#lib"/></svg><span style="left:69px;top:289px;letter-spacing:.2px">J2EE 1.4 Libraries</span>

<!-- Image panel -->
<svg class="i" style="left:8px;top:595px"><use href="#img"/></svg><span style="left:28px;top:596px">Imag</span><svg class="i" style="left:65px;top:595px"><use href="#cl"/></svg>
<svg class="i" style="left:104px;top:596px"><use href="#snp"/></svg><span style="left:123px;top:596px">Snipp</span>
<svg class="i" style="left:166px;top:591px"><use href="#mn"/></svg><svg class="i" style="left:184px;top:593px"><use href="#mx"/></svg>
<svg class="i" style="left:39px;top:620px"><use href="#lnk"/></svg><svg class="i" style="left:70px;top:620px"><use href="#im1"/></svg><svg class="i" style="left:92px;top:620px"><use href="#zm"/></svg><svg class="i" style="left:115px;top:620px"><use href="#zp"/></svg><svg class="i" style="left:139px;top:620px"><use href="#z100"/></svg><svg class="i" style="left:162px;top:620px"><use href="#zf"/></svg><svg class="i" style="left:184px;top:615px"><use href="#vm"/></svg>

<!-- Editor tabs -->
<svg class="i" style="left:211px;top:82px"><use href="#jf"/></svg><span style="left:231px;top:82px">student.java</span><svg class="i" style="left:305px;top:82px"><use href="#cl"/></svg>
<svg class="i" style="left:343px;top:82px"><use href="#jf"/></svg><span style="left:363px;top:82px">student1.java</span>
<svg class="i" style="left:469px;top:82px"><use href="#jf"/></svg><span style="left:489px;top:82px">student2.java</span>
<svg class="i" style="left:1675px;top:77px"><use href="#mn"/></svg><svg class="i" style="left:1693px;top:79px"><use href="#mx"/></svg>

<!-- Code -->
<div class="l" style="top:105px"><span class="k">package</span> luomengqi;</div>
<div class="l" style="top:139px"><span class="k">public class</span> student {</div>
<div class="l" style="top:173px"><span class="d">    /**</span></div>
<div class="l" style="top:190px"><span class="d">     * </span><span class="m">@param</span><span class="d"> args</span></div>
<div class="l" style="top:207px"><span class="d">     */</span></div>
<div class="l" style="top:224px">    <span class="k">public static void</span> main(String[] args) {</div>
<div class="l" style="top:241px">        <span class="g">// </span><span class="m">TODO</span><span class="g"> Auto-generated method stub</span></div>
<div class="l" style="top:258px">    <span class="k">int</span> a;</div>
<div class="l" style="top:275px">    a=5;</div>
<div class="l" style="top:292px">    <span class="k">if</span>(a%2==0){</div>
<div class="l" style="top:309px">        System.<span class="f">out</span>.println(<span class="s">"i<span class="z">为偶数</span>"</span>);</div>
<div class="l" style="top:326px">    }</div>
<div class="l" style="top:343px">    <span class="k">else</span>{</div>
<div class="l" style="top:360px">        System.<span class="f">out</span>.println(<span class="s">"i<span class="z">为奇数</span>"</span>);</div>
<div class="l" style="top:377px">    }</div>
<div class="l" style="top:394px">    }</div>
<div class="l" style="top:410px">}</div>

<!-- Outline -->
<svg class="i" style="left:1719px;top:81px"><use href="#ol"/></svg><span style="left:1741px;top:82px">Outline</span><svg class="i" style="left:1786px;top:81px"><use href="#cl"/></svg>
<svg class="i" style="left:1878px;top:76px"><use href="#mn"/></svg><svg class="i" style="left:1896px;top:79px"><use href="#mx"/></svg>
<svg class="i" style="left:1782px;top:105px"><use href="#az"/></svg><svg class="i" style="left:1805px;top:105px"><use href="#hf"/></svg><svg class="i" style="left:1829px;top:105px"><use href="#hs"/></svg><svg class="i" style="left:1851px;top:105px"><use href="#dot"/></svg><svg class="i" style="left:1874px;top:105px"><use href="#hl"/></svg><svg class="i" style="left:1895px;top:101px"><use href="#vm"/></svg>
<svg class="i" style="left:1748px;top:129px"><use href="#pko"/></svg><span style="left:1774px;top:129px">luomengqi</span>
<svg class="i" style="left:1746px;top:149px"><use href="#cls"/></svg><span style="left:1774px;top:149px">student</span>
<svg class="i" style="left:1772px;top:170px"><use href="#dot"/></svg><span style="left:1788px;top:164px;font-size:9px;color:#c8102e;font-weight:bold">S</span><span class="clip" style="left:1799px;top:169px;width:114px;letter-spacing:.4px">main(String[]) : void</span>

<!-- Properties -->
<svg class="i" style="left:1721px;top:595px"><rect x="0.5" y="1.5" width="15" height="12" fill="#fff" stroke="#5a7aa8"/><rect x="1" y="2" width="14" height="2.500" fill="#7aa0d0"/><path d="M1 7h14M1 10h14M5 4v9" stroke="#7a98c0"/></svg>
<span style="left:1741px;top:596px">Properties</span><svg class="i" style="left:1805px;top:595px"><use href="#cl"/></svg>
<svg class="i" style="left:1878px;top:591px"><use href="#mn"/></svg><svg class="i" style="left:1896px;top:593px"><use href="#mx"/></svg>
<svg class="i" style="left:1806px;top:620px"><use href="#tr"/></svg><svg class="i" style="left:1829px;top:620px"><use href="#tn"/></svg><svg class="i" style="left:1851px;top:620px"><use href="#tg"/></svg><svg class="i" style="left:1874px;top:620px"><use href="#pin"/></svg><svg class="i" style="left:1896px;top:615px"><use href="#vm"/></svg>
<span style="left:1726px;top:645px">Property</span><span style="left:1802px;top:645px">Value</span><span style="left:1743px;top:667px">Info</span>
<span class="clip" style="left:1763px;top:687px;width:32px">derived</span><span style="left:1801px;top:687px">false</span>
<span class="clip" style="left:1763px;top:707px;width:32px">editable</span><span style="left:1801px;top:707px">true</span>
<span class="clip" style="left:1763px;top:727px;width:32px">last modified</span><span style="left:1801px;top:727px;letter-spacing:.2px">2019年4月3日 上...</span>
<span class="clip" style="left:1763px;top:747px;width:32px">linked</span><span style="left:1801px;top:747px">false</span>
<span class="clip" style="left:1763px;top:767px;width:32px">location</span><span style="left:1801px;top:767px">C:\Users\WIN10...</span>
<span class="clip" style="left:1763px;top:787px;width:32px">name</span><span style="left:1801px;top:787px;letter-spacing:.3px">student1.java</span>
<span class="clip" style="left:1763px;top:807px;width:32px">path</span><span style="left:1801px;top:807px">/student/src/luo...</span>
<span class="clip" style="left:1763px;top:827px;width:32px">size</span><span style="left:1801px;top:827px;letter-spacing:.2px">316&nbsp; bytes</span>

<!-- Console tabs -->
<svg class="i" style="left:210px;top:853px"><use href="#prob"/></svg><span style="left:231px;top:853px">Problems</span>
<svg class="i" style="left:295px;top:853px"><use href="#task"/></svg><span style="left:314px;top:853px">Tasks</span>
<svg class="i" style="left:355px;top:853px"><use href="#wb"/></svg><span style="left:375px;top:853px">Web Browser</span>
<svg class="i" style="left:462px;top:853px"><use href="#mon"/></svg><span style="left:482px;top:853px">Console</span><svg class="i" style="left:534px;top:853px"><use href="#cl"/></svg>
<svg class="i" style="left:573px;top:853px"><use href="#srvs"/></svg><span style="left:593px;top:853px">Servers</span>
<span style="left:212px;top:875px">&lt;terminated&gt; student [Java Application] C:\Users\WIN10\AppData\Local\Genuitec\Common\binary\com.sun.java.jdk.win32.x86_1.6.0.013\bin\javaw.exe (2019-4-3 上午11:16:26)</span>
<div class="l" style="left:211px;top:893px">i<span class="z">为奇数</span></div>
<svg class="i" style="left:1396px;top:852px"><use href="#stp"/></svg><svg class="i" style="left:1419px;top:852px"><use href="#rm"/></svg><svg class="i" style="left:1442px;top:852px"><use href="#rma"/></svg>
<svg class="i" style="left:1473px;top:852px"><use href="#cdoc"/></svg><svg class="i" style="left:1497px;top:852px"><use href="#lock"/></svg>
<svg class="i" style="left:1520px;top:852px"><use href="#cm"/></svg><svg class="i" style="left:1543px;top:852px"><use href="#cmx"/></svg>
<svg class="i" style="left:1573px;top:852px"><use href="#pin"/></svg><svg class="i" style="left:1598px;top:852px"><use href="#mon"/></svg><svg class="i" style="left:1616px;top:852px"><use href="#dd"/></svg>
<svg class="i" style="left:1637px;top:852px"><use href="#new"/></svg><svg class="i" style="left:1656px;top:852px"><use href="#dd"/></svg>
<svg class="i" style="left:1675px;top:848px"><use href="#mn"/></svg><svg class="i" style="left:1693px;top:850px"><use href="#mx"/></svg>

<!-- status -->
<svg class="i" style="left:15px;top:1015px"><use href="#sts"/></svg>
<span style="left:1337px;top:1017px;letter-spacing:.2px">Writable</span><span style="left:1441px;top:1017px">Smart Insert</span><span style="left:1540px;top:1017px;letter-spacing:0">20 : 1</span>
</div></body></html>
